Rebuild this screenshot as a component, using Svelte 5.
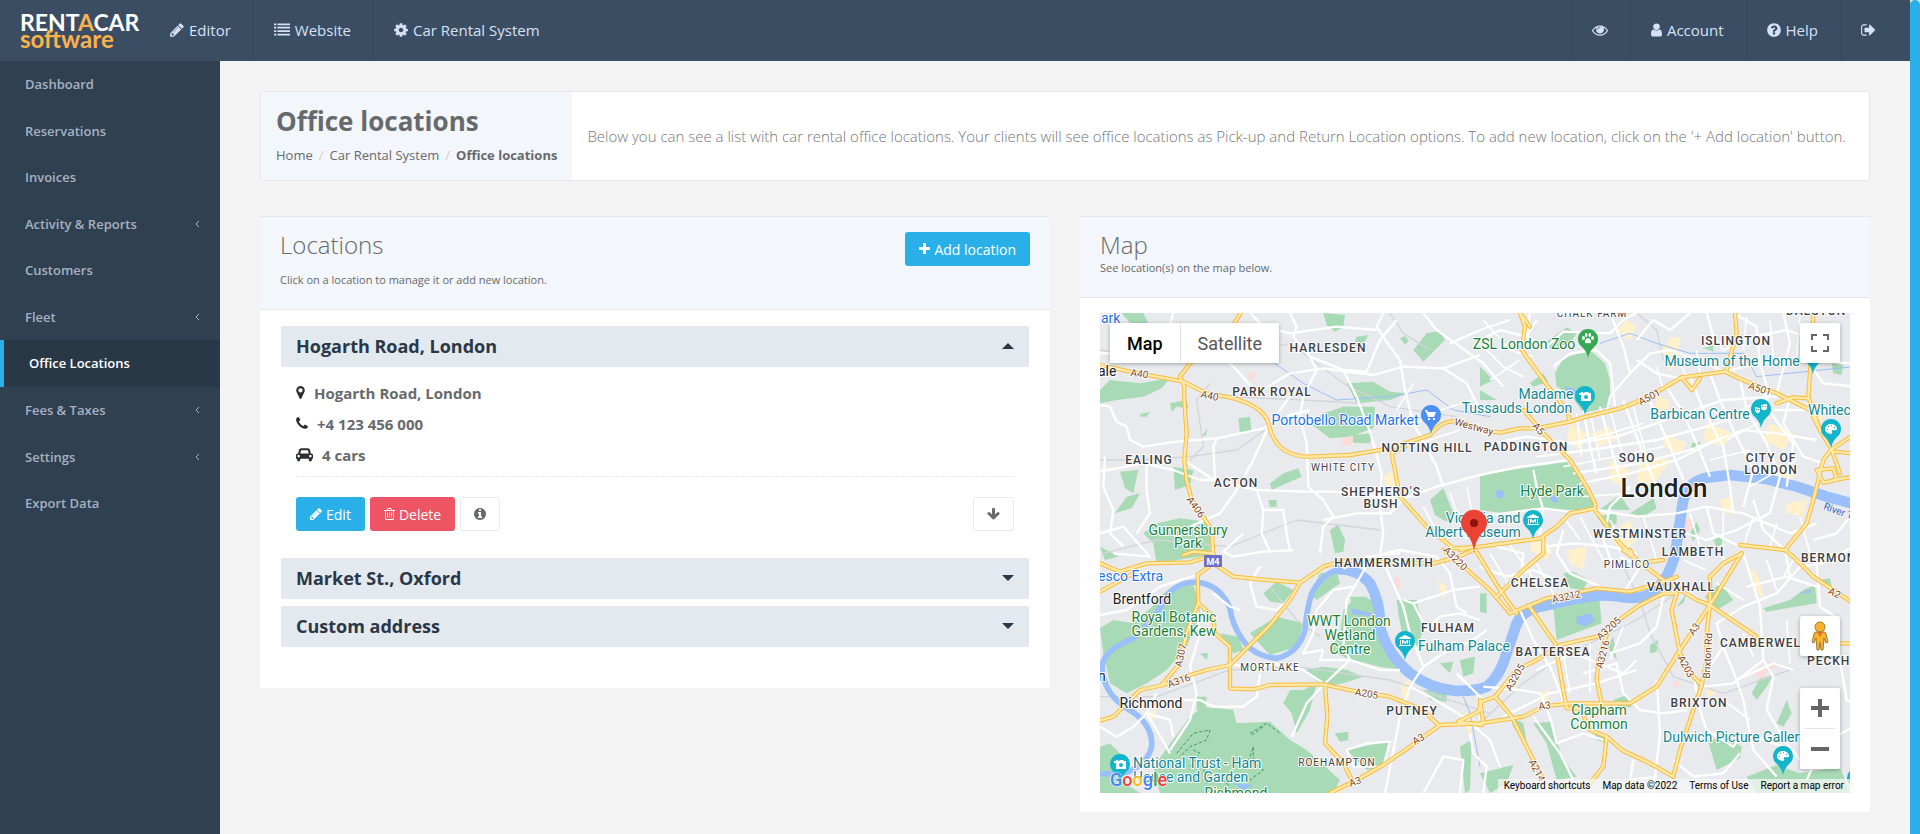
<script lang="ts">
  type Label = { t: string; x: number; y: number; r?: number; start?: boolean };

  const menu = [
    { label: "Dashboard" },
    { label: "Reservations" },
    { label: "Invoices" },
    { label: "Activity & Reports", sub: true },
    { label: "Customers" },
    { label: "Fleet", sub: true },
    { label: "Office Locations", active: true },
    { label: "Fees & Taxes", sub: true },
    { label: "Settings", sub: true },
    { label: "Export Data" },
  ];

  const locations = [
    { id: 1, name: "Hogarth Road, London", phone: "+4 123 456 000", cars: 4 },
    { id: 2, name: "Market St., Oxford", phone: "", cars: 0 },
    { id: 3, name: "Custom address", phone: "", cars: 0 },
  ];

  let openId = $state(1);
  let mapType = $state("map");

  function toggle(id: number) {
    openId = openId === id ? 0 : id;
  }

  // x offset, width, path
  const icons: Record<string, [number, number, string]> = {
    pencil: [128, 1536, "M491 1536l91-91-235-235-91 91v107h128v128h107zm523-928q0-22-22-22-10 0-17 7l-542 542q-7 7-7 17 0 22 22 22 10 0 17-7l542-542q7-7 7-17zm-54-192l416 416-832 832h-416v-416zm683 96q0 53-37 90l-166 166-416-416 166-165q36-38 90-38 53 0 91 38l235 234q37 39 37 91z"],
    list: [0, 1792, "M0 1312h256v192H0zM0 928h256v192H0zM0 544h256v192H0zM0 160h256v192H0zM384 1312h1408v192H384zM384 928h1408v192H384zM384 544h1408v192H384zM384 160h1408v192H384z"],
    cog: [128, 1536, "M1152 896q0-106-75-181t-181-75-181 75-75 181 75 181 181 75 181-75 75-181zm512-109v222q0 12-8 23t-20 13l-185 28q-19 54-39 91 35 50 107 138 10 12 10 25t-9 23q-27 37-99 108t-94 71q-12 0-26-9l-138-108q-44 23-91 38-16 136-29 186-7 28-36 28h-222q-14 0-24.5-8.5t-11.5-21.5l-28-184q-49-16-90-37l-141 107q-10 9-25 9-14 0-25-11-126-114-165-168-7-10-7-23 0-12 8-23 15-21 51-66.5t54-70.5q-27-50-41-99l-183-27q-13-2-21-12.5t-8-23.5v-222q0-12 8-23t19-13l186-28q14-46 39-92-40-57-107-138-10-12-10-24 0-10 9-23 26-36 98.5-107.5t94.5-71.5q13 0 26 10l138 107q44-23 91-38 16-136 29-186 7-28 36-28h222q14 0 24.5 8.5t11.5 21.5l28 184q49 16 90 37l142-107q9-9 24-9 13 0 25 10 129 119 165 170 7 8 7 22 0 12-8 23-15 21-51 66.5t-54 70.5q26 50 41 98l183 28q13 2 21 12.5t8 23.5z"],
    eye: [0, 1792, "M1664 960q-152-236-381-353 61 104 61 225 0 185-131.5 316.5t-316.5 131.5-316.5-131.5-131.5-316.5q0-121 61-225-229 117-381 353 133 205 333.5 326.5t434.5 121.5 434.5-121.5 333.5-326.5zm-720-384q0-20-14-34t-34-14q-125 0-214.5 89.5t-89.5 214.5q0 20 14 34t34 14 34-14 14-34q0-86 61-147t147-61q20 0 34-14t14-34zm848 384q0 34-20 69-140 230-376.5 368.5t-499.5 138.5-499.5-139-376.5-368q-20-35-20-69t20-69q140-229 376.5-368t499.5-139 499.5 139 376.5 368q20 35 20 69z"],
    user: [256, 1280, "M1536 1399q0 109-62.5 187t-150.5 78h-854q-88 0-150.5-78t-62.5-187q0-85 8.500-160.500t31.500-152 58.500-131 94-89 134.500-34.500q131 128 313 128t313-128q76 0 134.500 34.500t94 89 58.500 131 31.500 152 8.500 160.500zm-256-887q0 159-112.500 271.500t-271.500 112.500-271.500-112.500-112.500-271.500 112.500-271.500 271.500-112.500 271.500 112.500 112.500 271.500z"],
    question: [128, 1536, "M1024 1376v-192q0-14-9-23t-23-9h-192q-14 0-23 9t-9 23v192q0 14 9 23t23 9h192q14 0 23-9t9-23zm256-672q0-88-55.5-163t-138.5-116-170-41q-243 0-371 213-15 24 8 42l132 100q7 6 19 6 16 0 25-12 53-68 86-92 34-24 86-24 48 0 85.5 26t37.5 59q0 38-20 61t-68 45q-63 28-115.5 86.5t-52.5 125.5v36q0 14 9 23t23 9h192q14 0 23-9t9-23q0-19 21.5-49.5t54.5-49.5q32-18 49-28.5t46-35 44.500-48 28-60.500 12.500-81zm384 192q0 209-103 385.500t-279.500 279.500-385.500 103-385.500-103-279.500-279.500-103-385.500 103-385.500 279.500-279.500 385.500-103 385.500 103 279.500 279.500 103 385.500z"],
    signout: [64, 1664, "M704 1440q0 4 1 20t.5 26.5-3 23.5-10 19.5-20.5 6.5h-320q-119 0-203.5-84.5t-84.500-203.500v-704q0-119 84.500-203.500t203.500-84.500h320q13 0 22.500 9.500t9.500 22.500q0 4 1 20t.5 26.500-3 23.500-10 19.500-20.500 6.500h-320q-66 0-113 47t-47 113v704q0 66 47 113t113 47h312l11.500 1 11.500 3 8 5.500 7 9 2 13.500zm928-544q0 26-19 45l-544 544q-19 19-45 19t-45-19-19-45v-288h-448q-26 0-45-19t-19-45v-384q0-26 19-45t45-19h448v-288q0-26 19-45t45-19 45 19l544 544q19 19 19 45z"],
    marker: [384, 1024, "M1152 640q0-106-75-181t-181-75-181 75-75 181 75 181 181 75 181-75 75-181zm256 0q0 109-33 179l-364 774q-16 33-47.500 52t-67.500 19-67.500-19-46.500-52l-365-774q-33-70-33-179 0-212 150-362t362-150 362 150 150 362z"],
    phone: [192, 1408, "M1600 1240q0 27-10 70.500t-21 68.500q-21 50-122 106-94 51-186 51-27 0-53-3.500t-57.500-12.500-47-14.500-55.500-20.500-49-18q-98-35-175-83-127-79-264-216t-216-264q-48-77-83-175-3-9-18-49t-20.500-55.500-14.500-47-12.500-57.500-3.500-53q0-92 51-186 56-101 106-122 25-11 68.500-21t70.500-10q14 0 21 3 18 6 53 76 11 19 30 54t35 63.500 31 53.500q3 4 17.500 25t21.500 35.500 7 28.500q0 20-28.500 50t-62 55-62 53-28.500 46q0 9 5 22.500t8.500 20.500 14 24 11.500 19q76 137 174 235t235 174q2 1 19 11.500t24 14 20.500 8.500 22.500 5q18 0 46-28.500t53-62 55-62 50-28.500q14 0 28.500 7t35.500 21.500 25 17.500q25 15 53.500 31t63.500 35 54 30q70 35 76 53 3 7 3 21z"],
    car: [0, 2048, "M480 1088q0-66-47-113t-113-47-113 47-47 113 47 113 113 47 113-47 47-113zm36-320h1016l-89-357q-2-8-14-17.500t-21-9.500h-768q-9 0-21 9.500t-14 17.500zm1372 320q0-66-47-113t-113-47-113 47-47 113 47 113 113 47 113-47 47-113zm160-96v384q0 14-9 23t-23 9h-96v128q0 80-56 136t-136 56-136-56-56-136v-128h-1024v128q0 80-56 136t-136 56-136-56-56-136v-128h-96q-14 0-23-9t-9-23v-384q0-93 65.500-158.500t158.500-65.500h28l105-419q23-94 104-157.500t179-63.500h768q98 0 179 63.500t104 157.500l105 419h28q93 0 158.500 65.500t65.500 158.500z"],
    trash: [192, 1408, "M704 736v576q0 14-9 23t-23 9h-64q-14 0-23-9t-9-23v-576q0-14 9-23t23-9h64q14 0 23 9t9 23zm256 0v576q0 14-9 23t-23 9h-64q-14 0-23-9t-9-23v-576q0-14 9-23t23-9h64q14 0 23 9t9 23zm256 0v576q0 14-9 23t-23 9h-64q-14 0-23-9t-9-23v-576q0-14 9-23t23-9h64q14 0 23 9t9 23zm128 724v-948h-896v948q0 22 7 40.500t14.500 27 10.500 8.500h832q3 0 10.500-8.500t14.500-27 7-40.500zm-672-1076h448l-48-117q-7-9-17-11h-317q-10 2-17 11zm928 32v64q0 14-9 23t-23 9h-96v948q0 83-47 143.500t-113 60.500h-832q-66 0-113-58.500t-47-141.500v-952h-96q-14 0-23-9t-9-23v-64q0-14 9-23t23-9h309l70-167q15-37 54-63t79-26h320q40 0 79 26t54 63l70 167h309q14 0 23 9t9 23z"],
    info: [128, 1536, "M1152 1376v-160q0-14-9-23t-23-9h-96v-512q0-14-9-23t-23-9h-320q-14 0-23 9t-9 23v160q0 14 9 23t23 9h96v320h-96q-14 0-23 9t-9 23v160q0 14 9 23t23 9h448q14 0 23-9t9-23zm-128-896v-160q0-14-9-23t-23-9h-192q-14 0-23 9t-9 23v160q0 14 9 23t23 9h192q14 0 23-9t9-23zm640 416q0 209-103 385.500t-279.500 279.500-385.500 103-385.500-103-279.500-279.500-103-385.500 103-385.500 279.500-279.500 385.500-103 385.500 103 279.500 279.500 103 385.500z"],
    down: [64, 1664, "M1675 832q0 53-37 90l-651 652q-39 37-91 37-53 0-90-37l-651-652q-38-36-38-90 0-53 38-91l74-75q39-37 91-37 53 0 90 37l294 294v-704q0-52 38-90t90-38h128q52 0 90 38t38 90v704l294-294q37-37 90-37 52 0 91 37l75 75q37 39 37 91z"],
    plus: [192, 1408, "M1600 736v192q0 40-28 68t-68 28h-416v416q0 40-28 68t-68 28h-192q-40 0-68-28t-28-68v-416h-416q-40 0-68-28t-28-68v-192q0-40 28-68t68-28h416v-416q0-40 28-68t68-28h192q40 0 68 28t28 68v416h416q40 0 68 28t28 68z"],
  };

  // map shapes are drawn on a 2250 x 1440 sheet, labels on 750 x 480
  const thames =
    "M2290 612L2210 590L2120 560L2030 537L1920 525L1850 533Q1790 545 1778 610L1765 700L1755 765Q1735 840 1690 875Q1660 900 1600 892Q1540 878 1450 898L1330 925Q1285 945 1275 985L1250 1060Q1230 1130 1190 1160Q1150 1175 1090 1172Q1020 1165 960 1120Q890 1060 870 980Q872 910 840 850Q800 805 740 808";
  const thamesWest =
    "M760 806Q700 815 665 880Q650 930 645 990Q625 1060 560 1075Q490 1070 455 1015Q425 970 420 925Q395 865 340 850Q270 835 230 890Q200 950 130 1015Q40 1050 36 1100Q40 1180 110 1225Q190 1270 185 1340Q170 1400 100 1420L30 1422";

  const parks = [
    "M30 270L60 240L150 250L240 235L215 265L160 290L80 300L30 310z",
    "M95 39L160 40L180 80L120 70z",
    "M700 39L765 45L760 80L735 95L710 75z",
    "M970 150L1010 100L1050 92L1065 120L1000 185z",
    "M770 250L850 245L900 275L950 280L900 300L800 310z",
    "M700 340L760 320L855 320L850 385L780 410L720 415L660 370z",
    "M785 405L845 400L840 430L790 428z",
    "M800 110L835 105L820 135L790 140z",
    "M930 115L945 108L957 122L945 134z",
    "M240 310L290 300L295 325L260 320L245 335z",
    "M150 342L180 335L170 350L152 350z",
    "M445 355L480 350L485 395L450 400z",
    "M335 410L352 385L348 405z",
    "M90 515L145 510L130 580L105 565z",
    "M250 500L310 510L300 555L255 570z",
    "M75 640L110 590L150 580L125 625z",
    "M540 550L580 520L625 505L635 530L590 550L545 570z",
    "M160 700L200 670L270 655L350 665L365 700L360 765L200 790L190 730z",
    "M1010 320L1025 315L1020 350z",
    "M720 690L745 675L765 720L760 755L735 760z",
    "M1020 600L1060 565L1090 640L1070 665L1035 645z",
    "M535 600L560 600L560 620L540 622z",
    "M30 740L60 755L85 770L45 780z",
    "M1395 220L1420 175L1500 150L1545 190L1560 240L1560 320L1480 340L1440 280L1400 260z",
    "M1320 250L1360 220L1375 245L1330 260z",
    "M1370 125L1430 82L1460 100L1440 130L1380 145z",
    "M1170 525L1330 500L1430 485L1470 530L1515 620L1440 635L1360 625L1240 640L1170 630z",
    "M1530 628L1590 585L1620 630z",
    "M1620 640L1690 595L1700 625L1660 650z",
    "M1520 650L1580 640L1580 670L1550 690z",
    "M1170 200L1210 240L1170 260z",
    "M1170 270L1220 300L1170 300z",
    "M1805 430L1830 425L1830 445L1805 448z",
    "M1840 145L1870 135L1870 155z",
    "M1800 700L1820 665L1830 690L1810 725z",
    "M1870 720L1900 705L1905 730L1880 740z",
    "M2225 190L2260 195L2255 225L2230 220z",
    "M30 985L70 960L130 970L220 890L290 850L325 900L330 940L290 1040L230 1110L170 1150L110 1180L60 1150L40 1060z",
    "M190 905L245 860L310 855L320 890L250 910z",
    "M480 1000L560 950L640 970L620 1040L540 1065z",
    "M520 880L560 845L610 870L580 910L540 905z",
    "M690 820L740 815L750 850L680 900L660 880z",
    "M760 930L800 890L850 900L860 960L900 1060L930 1110L870 1100L770 1075L720 1050L750 1000z",
    "M780 890L830 890L870 970L790 960z",
    "M390 1000L445 1010L460 1050L430 1060z",
    "M640 1110L700 1100L770 1110L820 1130L760 1150L700 1160z",
    "M580 1210L600 1170L640 1170L680 1150L660 1230L620 1300L605 1240z",
    "M330 1060L355 1060L350 1080z",
    "M300 1250L340 1220L430 1230L440 1270L540 1265L600 1320L650 1350L750 1440L730 1479L320 1479L210 1479L190 1400z",
    "M320 1190L350 1190L345 1240L320 1230z",
    "M30 1340L60 1330L110 1380L60 1420L150 1479L30 1479z",
    "M770 1350L900 1322L880 1400L830 1410z",
    "M735 1300L775 1295L775 1320L750 1325z",
    "M920 900L980 900L1000 990L980 1040L940 1020L925 940z",
    "M1050 1090L1090 1085L1080 1120z",
    "M1110 1080L1155 1070L1150 1120L1120 1130z",
    "M1000 1170L1070 1170L1070 1205L1020 1200z",
    "M1110 1340L1145 1320L1140 1470L1125 1479z",
    "M1390 925L1525 870L1535 970L1400 1020z",
    "M1420 820L1450 815L1495 840L1480 870L1440 865z",
    "M1170 880L1190 880L1190 940L1170 935z",
    "M1330 1270L1380 1265L1420 1380L1460 1430L1400 1440L1370 1330z",
    "M1260 1250L1300 1270L1310 1330L1270 1280z",
    "M1570 1200L1610 1185L1625 1220L1590 1225z",
    "M1510 1290L1560 1310L1550 1330L1520 1320z",
    "M1680 1035L1705 1020L1700 1055L1680 1060z",
    "M1550 1040L1570 1010L1580 1080z",
    "M2020 925L2100 900L2140 870L2175 855L2180 910L2090 925L2030 935z",
    "M1985 1180L2010 1135L2050 1125L2030 1160L2000 1200z",
    "M2060 1270L2090 1200L2105 1240L2080 1280z",
    "M1855 1325L1900 1305L1955 1340L1950 1375L1880 1410z",
    "M1970 1430L2060 1395L2130 1420L2250 1400L2280 1479L2000 1479z",
    "M1845 890L1890 850L1930 900L1880 930z",
    "M1170 1420L1270 1395L1250 1450L1200 1479z",
    "M1760 920L1790 880L1780 910z",
    "M2190 840L2220 835L2225 860z",
  ];

  const cream = [
    "M1715 150L1745 110L1770 115L1765 180L1740 215z",
    "M1580 90L1610 60L1640 80L1620 120z",
    "M880 530L910 510L925 560L890 570z",
    "M1720 400L1790 430L1770 460L1720 440z",
    "M1650 470L1740 480L1700 540L1640 560z",
    "M1500 400L1560 380L1580 420L1520 440z",
    "M1440 370L1490 400L1470 450L1430 420z",
    "M1560 480L1620 510L1600 560L1560 540z",
    "M1850 370L1930 400L1900 440L1840 420z",
    "M2040 370L2110 400L2080 450L2020 420z",
    "M2060 490L2120 520L2080 555L2030 530z",
    "M1890 600L1920 590L1930 640L1900 640z",
    "M2090 610L2150 600L2140 650L2090 640z",
    "M1560 700L1620 660L1640 720L1590 760z",
    "M1430 750L1490 740L1480 810L1440 790z",
    "M1330 710L1390 740L1370 780L1320 750z",
    "M1980 800L2005 830L2025 900L2000 880z",
    "M2160 300L2210 330L2190 370z",
    "M1700 290L1740 300L1730 340L1690 330z",
    "M1850 1160L1880 1180L1850 1190z",
    "M935 1150L960 1140L955 1200L935 1190z",
    "M160 1240L200 1230L190 1260z",
    "M1120 1240L1150 1250L1140 1320z",
    "M1350 1180L1375 1170L1380 1230z",
    "M30 505L80 500L40 515z",
    "M1040 840L1070 860L1060 900z",
  ];

  const streets = [
    "M600 39L620 80L610 110L660 170L760 210L800 290L845 410L875 520L870 620L880 700L870 765L900 830L940 920L960 1000L1000 1100L960 1160L930 1250L885 1479",
    "M880 39L860 80L900 140L930 180L945 270L970 370L1040 500L1060 560",
    "M1000 39L1040 90L1110 140L1180 190L1240 260",
    "M660 170L680 210L640 290L630 350L650 430L655 560L700 600L730 650L700 680L690 760",
    "M30 315L60 320L80 365L110 380L120 420L160 440L260 425L380 415L520 385L600 345L660 330",
    "M380 415L370 440L375 540L330 540L250 510L160 490L30 515",
    "M280 480L380 545L500 570L640 575L730 575L870 590",
    "M600 290L540 370L490 480L440 570L390 640L300 680",
    "M30 700L100 680L180 770L70 760",
    "M500 570L520 630L515 700L540 755",
    "M520 630L580 630L590 700L600 755",
    "M460 700L400 755L430 770L520 755L610 750",
    "M250 39L235 90L210 130L160 160L30 160",
    "M480 39L520 80L600 100L740 80L860 90",
    "M400 170L440 210L500 280L600 220L700 205L850 225",
    "M760 210L830 215L870 120L920 60",
    "M850 225L940 200L1060 205L1170 165",
    "M1060 205L1130 250L1170 330L1300 340",
    "M1080 130L1170 90L1260 60",
    "M870 590L930 600L1040 560L1170 525L1290 500L1440 480",
    "M700 660L800 640L900 640L940 600",
    "M45 470L40 560L70 630L60 700L100 740",
    "M170 490L170 570L180 640L140 700",
    "M1170 120L1230 90L1310 110L1340 60",
    "M1320 39L1310 110L1370 140L1420 95L1560 100L1600 60L1640 39",
    "M1560 39L1600 140L1620 220L1560 290L1550 340",
    "M1390 200L1440 160L1520 150L1560 190L1575 320",
    "M1640 120L1690 60L1740 90L1800 39",
    "M1620 220L1680 160L1740 150L1850 190L1900 215",
    "M1640 180L1700 220L1770 235",
    "M1850 39L1870 110L1900 150L1990 110L2090 90L2170 120",
    "M1900 215L2010 190L2150 180L2290 190",
    "M1930 39L2000 80L2010 190L2040 290",
    "M2080 39L2100 130L2060 280",
    "M2150 180L2200 250L2290 260",
    "M1210 430L1310 410L1450 430L1580 410L1700 370L1900 300L2060 290",
    "M1340 470L1500 450L1700 420L1850 380L2000 330L2150 330",
    "M1450 520L1650 490L1800 450L1960 390L2060 400L2180 420",
    "M1470 550L1620 520L1760 480L1880 420",
    "M1480 330L1500 440L1520 520",
    "M1530 320L1560 430L1590 540",
    "M1600 300L1640 410L1690 540L1740 600",
    "M1670 280L1700 350L1740 440L1780 540",
    "M1730 260L1780 340L1820 430L1860 530",
    "M1800 230L1840 330L1900 440L1920 560L1930 640",
    "M1860 220L1890 300L1930 390L1990 510L1960 620",
    "M1950 240L1970 330L2030 430L2070 530L2040 640",
    "M2020 270L2050 350L2110 430L2090 560",
    "M2100 290L2080 370L2140 470L2200 490",
    "M1330 510L1340 560L1360 630L1350 700L1380 760",
    "M1515 630L1640 650L1760 640",
    "M1620 560L1560 620L1540 720L1570 800",
    "M1760 640L1850 620L1960 640L2100 700L2180 670",
    "M1760 690L1850 720L1940 690L2040 640",
    "M1850 620L1870 700L1950 740",
    "M1990 600L2020 690L2085 750L2100 830",
    "M2170 720L2240 700L2290 640",
    "M1170 650L1240 640L1360 625L1440 635L1520 630",
    "M1360 740L1460 730L1560 740L1640 760",
    "M1420 690L1400 760L1440 820L1530 860",
    "M1220 740L1300 760L1290 850",
    "M1170 800L1250 830L1330 810L1400 840",
    "M870 765L930 750L1040 770L1080 820L1100 920L1130 940",
    "M760 806L830 770L930 760",
    "M790 860L730 870L680 930L670 1000L640 1060L700 1050",
    "M840 780L770 900L760 1040L780 1080L705 1150L650 1210L605 1310",
    "M700 1050L690 1080L780 1080L870 1110L930 1110",
    "M940 900L970 910L1010 990L1050 950L1110 940L1170 960",
    "M970 910L1090 870L1170 860",
    "M1000 1100L1060 1060L1150 1020L1190 990",
    "M960 1160L1020 1190L1120 1250L1200 1320L1230 1400",
    "M1100 1120L1180 1200L1170 1260",
    "M30 945L110 930L210 860L320 825",
    "M320 920L330 1000L300 1100L320 1180L300 1260L240 1350",
    "M510 800L480 850L500 920L560 930L600 900",
    "M370 880L420 920L450 930",
    "M420 1090L500 1110L550 1090L640 1110L700 1150",
    "M510 1120L500 1190L460 1220L370 1220L330 1200L230 1200",
    "M200 1180L170 1240L200 1290L240 1360",
    "M30 1280L80 1310L130 1280L170 1240L240 1260L250 1310",
    "M770 1350L830 1330L900 1325L880 1400L790 1400z",
    "M1000 1479L1060 1370L1120 1380L1110 1479",
    "M1140 1300L1150 1360L1190 1400L1180 1479",
    "M1290 930L1330 1020L1380 1100L1420 1200L1400 1220",
    "M1340 1110L1450 1060L1600 1120L1640 1080",
    "M1240 1250L1380 1180L1520 1150L1640 1110",
    "M1180 1160L1290 1170L1350 1180L1380 1250L1400 1330L1480 1300L1540 1320",
    "M1330 1250L1410 1360L1460 1460",
    "M1480 1120L1580 1090L1600 1180L1650 1230L1720 1240L1790 1230",
    "M1720 890L1700 980L1650 1030L1560 1060",
    "M1700 1140L1710 1300L1690 1479",
    "M1860 1100L1900 1040L1880 970L1960 920L2060 880",
    "M1900 1040L1940 1140L1960 1200L1990 1350L2060 1430",
    "M1940 1140L2050 1090L2110 1110",
    "M1840 1160L1930 1150L2020 1080L2010 920L1960 760",
    "M1810 1120L1830 1230L1850 1290L1930 1340L1960 1300L2080 1340",
    "M2020 1080L2050 1130L2030 1230L2090 1330L2130 1380",
    "M1750 1380L1810 1430L1900 1420L1950 1360",
    "M2060 880L2130 800L2200 790L2290 740",
    "M2180 790L2190 920L2250 960",
    "M1970 860L2090 830L2180 860",
    "M1600 880L1650 800L1590 770",
    "M2250 1080L2270 1200L2290 1210",
    "M1630 1380L1620 1440L1700 1430",
    "M2290 1280L2200 1330L2150 1440",
  ];

  const lanes = [
    "M1180 60L1260 150L1330 170M1180 140L1240 200L1300 230M1200 240L1290 180",
    "M1460 340L1475 470M1500 335L1530 480M1560 330L1600 470M1630 320L1670 470",
    "M1400 440L1560 400L1660 370M1420 500L1600 465L1720 440M1480 590L1620 580",
    "M1700 200L1720 270M1760 170L1790 230M1820 150L1830 220",
    "M1880 360L2000 310M1910 420L2040 350M1860 480L1980 450M1980 560L2120 480",
    "M1970 50L1960 150M2040 60L2050 170M2130 50L2120 170M2220 90L2210 180",
    "M1800 640L1830 740M1900 640L1900 780M1990 650L1960 740M2060 670L2040 740M2130 650L2160 760",
    "M1420 650L1470 720M1470 650L1540 780M1560 660L1610 750M1660 650L1700 780",
    "M1780 780L1850 810M1880 850L1960 900M2030 780L2060 870M2110 780L2080 830",
    "M1200 760L1260 860M1250 720L1340 850M1340 790L1400 900",
    "M1000 620L1060 730M1080 580L1130 720M1130 560L1160 700",
    "M960 380L1050 330L1150 300M990 430L1110 390M920 330L970 250",
    "M1900 1200L1980 1260M1960 1000L1990 1070M2090 960L2100 1090",
    "M1420 1060L1440 1180M1500 1030L1500 1180M1600 980L1560 1080",
  ];

  const rails = [
    "M30 150L200 180L400 170L600 130L760 250L900 320L1100 350",
    "M30 480L150 480L300 470L440 450L540 380",
    "M420 290L640 300L820 310",
    "M40 760L200 720L420 740L620 660L870 690",
    "M30 1190L200 1190L420 1110L620 1100L900 1140L1200 1240",
    "M540 860L620 960L690 1010",
    "M1600 800L1650 900L1680 1000L1750 1130L1900 1180L2100 1110",
    "M1170 1270L1300 1150L1400 1080L1640 960L1760 880",
    "M300 480L340 440L320 300L360 250",
    "M900 39L940 100L1020 150",
    "M1640 39L1700 90L1720 180",
  ];

  const majors = [
    "M30 195L120 215L200 230L280 245L350 280L420 292Q530 320 538 380Q560 470 660 470L780 465L900 445L960 425L1020 405Q1060 355 1110 365L1180 390L1230 398L1290 385L1340 385L1440 365L1480 352L1590 325Q1650 305 1720 265L1775 232L1905 215L1970 245L2060 280L2100 300L2160 330L2190 390L2225 450L2250 520",
    "M452 39L430 75L300 190L270 230L283 260L283 300L290 400L283 480L290 540L305 600L340 650L365 690L370 765",
    "M30 790L90 815L170 790L300 787L370 765",
    "M30 875L130 820",
    "M323 825L370 790L430 830L530 840L630 848L700 800L760 782L1030 790L1100 772L1150 750",
    "M630 848L600 900L540 975L420 1095L350 1110L300 1125L220 1155L150 1170L110 1210L70 1250L30 1262",
    "M323 825L325 910L290 1000L270 1090L215 1155",
    "M325 910L370 950L375 1000L420 1040L420 1165L490 1168L540 1155L700 1153L800 1175L900 1190L1000 1230L1045 1275",
    "M705 1153L712 1250L705 1330L760 1390L785 1440",
    "M720 1479L800 1440L880 1395L960 1340L1050 1275L1170 1270L1300 1250L1360 1220L1440 1210L1620 1210L1700 1160L1770 1050L1860 915L1955 760",
    "M1105 1265L1165 1235L1175 1205L1215 1190L1280 1110L1340 1080L1410 1035L1520 1010L1600 950L1650 915L1720 880L1760 880",
    "M1105 1265L1175 1275",
    "M1215 1190L1265 1250L1360 1440",
    "M1170 1200L1180 1270",
    "M1470 1225L1500 1290L1550 1310L1595 1350L1680 1390L1750 1430",
    "M1550 1310L1540 1400L1500 1450",
    "M1315 915L1395 1030L1430 1225L1470 1225",
    "M1555 990L1525 1080L1520 1140L1535 1210",
    "M1260 940L1370 895L1520 865L1620 875L1710 850L1760 830",
    "M1600 750L1720 840L1820 900L1860 915L2000 1010",
    "M2250 1030L2290 1030",
    "M1760 880L1745 930L1760 1010L1770 1060L1810 1130L1835 1155",
    "M1860 915L1850 1000L1850 1080L1835 1155L1810 1230L1770 1350L1750 1430",
    "M1950 735L2085 750L2110 770L2170 830L2290 910",
    "M2085 750L2150 670L2170 600L2200 480L2222 450L2290 405",
    "M1290 39L1305 80L1295 150L1360 240L1390 280L1430 330L1440 365",
    "M1290 39L1320 80",
    "M1300 330L1360 400L1440 480L1490 560L1515 610L1515 630L1590 730L1640 780",
    "M1515 625L1440 640L1400 680L1350 715L1170 740L1090 745L1010 680L930 590L905 460L945 440",
    "M1060 750L1110 790L1200 870L1260 940",
    "M1110 750L1150 740L1230 870L1280 940",
    "M1360 715L1360 760L1300 810L1220 890",
    "M1935 39L1940 100L1908 215",
    "M2170 39L2160 220L2155 290L2190 390",
    "M2060 310L2110 292L2155 295",
    "M1830 235L1805 270L1775 232",
    "M2180 510L2230 505L2240 540L2200 548L2180 510",
    "M2230 455L2290 460",
    "M2230 540L2290 530",
    "M1620 750L1640 790L1720 780",
    "M1955 760L1900 790L1860 830L1860 915",
    "M280 765L310 755L370 760",
  ];

  const districts: Label[] = [
    { t: "HARLESDEN", x: 228, y: 39 }, { t: "PARK ROYAL", x: 172, y: 83 },
    { t: "NOTTING HILL", x: 327, y: 139 }, { t: "EALING", x: 49, y: 151 },
    { t: "ACTON", x: 136, y: 174 }, { t: "SHEPHERD'S", x: 281, y: 183 },
    { t: "BUSH", x: 281, y: 195 }, { t: "ISLINGTON", x: 636, y: 32 },
    { t: "PADDINGTON", x: 426, y: 138 }, { t: "SOHO", x: 537, y: 149 },
    { t: "CITY OF", x: 671, y: 149 }, { t: "LONDON", x: 671, y: 161 },
    { t: "WESTMINSTER", x: 540, y: 225 }, { t: "LAMBETH", x: 593, y: 243 },
    { t: "BERMONDSEY", x: 701, y: 249, start: true }, { t: "DALSTON", x: 686, y: 2, start: true },
    { t: "HAMMERSMITH", x: 284, y: 254 }, { t: "FULHAM", x: 348, y: 319 },
    { t: "PUTNEY", x: 312, y: 402 }, { t: "CHELSEA", x: 440, y: 274 },
    { t: "VAUXHALL", x: 581, y: 278 }, { t: "BATTERSEA", x: 453, y: 343 },
    { t: "CAMBERWELL", x: 620, y: 334, start: true }, { t: "PECKHAM", x: 707, y: 352, start: true },
    { t: "BRIXTON", x: 599, y: 394 },
  ];

  const quarters: Label[] = [
    { t: "WHITE CITY", x: 243, y: 158 }, { t: "CHALK FARM", x: 492, y: 4 },
    { t: "MORTLAKE", x: 170, y: 358 }, { t: "ROEHAMPTON", x: 237, y: 453 },
    { t: "PIMLICO", x: 527, y: 255 },
  ];

  const towns: Label[] = [
    { t: "ale", x: -2, y: 63, start: true }, { t: "Brentford", x: 42, y: 291 },
    { t: "Richmond", x: 51, y: 395 }, { t: "n", x: -2, y: 368, start: true },
  ];

  const shops: Label[] = [
    { t: "ark", x: 1, y: 10, start: true }, { t: "esco Extra", x: -2, y: 268, start: true },
    { t: "Portobello Road Market", x: 245, y: 112 },
  ];

  const greens: Label[] = [
    { t: "Gunnersbury", x: 88, y: 222 }, { t: "Park", x: 88, y: 235 },
    { t: "ZSL London Zoo", x: 424, y: 36 }, { t: "Hyde Park", x: 452, y: 183 },
    { t: "Royal Botanic", x: 74, y: 309 }, { t: "Gardens, Kew", x: 74, y: 323 },
    { t: "WWT London", x: 249, y: 313 }, { t: "Wetland", x: 250, y: 327 },
    { t: "Centre", x: 250, y: 341 }, { t: "Clapham", x: 499, y: 402 },
    { t: "Common", x: 499, y: 416 }, { t: "Richmond", x: 136, y: 485 },
  ];

  const sights: Label[] = [
    { t: "Victoria and", x: 383, y: 210 }, { t: "Albert Museum", x: 373, y: 224 },
    { t: "Museum of the Home", x: 632, y: 53 }, { t: "Madame", x: 446, y: 86 },
    { t: "Tussauds London", x: 417, y: 100 }, { t: "Barbican Centre", x: 600, y: 106 },
    { t: "Whitechapel", x: 708, y: 102, start: true }, { t: "Fulham Palace", x: 318, y: 338, start: true },
    { t: "Dulwich Picture Gallery", x: 563, y: 429, start: true },
    { t: "National Trust - Ham", x: 33, y: 455, start: true },
    { t: "House and Garden", x: 33, y: 469, start: true },
  ];

  const roadNames: Label[] = [
    { t: "A40", x: 39, y: 64, r: 8 }, { t: "A40", x: 109, y: 86, r: 12 },
    { t: "A406", x: 93, y: 196, r: 55 }, { t: "Westway", x: 373, y: 117, r: 15 },
    { t: "A3220", x: 353, y: 248, r: 45 }, { t: "A501", x: 551, y: 87, r: -28 },
    { t: "A501", x: 659, y: 79, r: 18 }, { t: "A5", x: 436, y: 118, r: 50 },
    { t: "A307", x: 84, y: 343, r: -78 }, { t: "A316", x: 80, y: 371, r: -20 },
    { t: "A205", x: 266, y: 384, r: 10 }, { t: "A3", x: 320, y: 429, r: -30 },
    { t: "A3", x: 256, y: 472, r: -18 }, { t: "A3212", x: 467, y: 287, r: -12 },
    { t: "A3205", x: 511, y: 318, r: -42 }, { t: "A3216", x: 506, y: 342, r: -75 },
    { t: "A3205", x: 418, y: 366, r: -60 }, { t: "A3", x: 597, y: 318, r: -55 },
    { t: "A203", x: 583, y: 355, r: 62 }, { t: "Brixton Rd", x: 611, y: 343, r: -87 },
    { t: "A2", x: 733, y: 283, r: 26 }, { t: "A3", x: 445, y: 396, r: -8 },
    { t: "A214", x: 434, y: 459, r: 62 },
  ];

  const layers = [
    { kind: "road", list: roadNames },
    { kind: "district", list: districts },
    { kind: "quarter", list: quarters },
    { kind: "town", list: towns },
    { kind: "shop", list: shops },
    { kind: "green", list: greens },
    { kind: "sight", list: sights },
  ];

  const glyphs: Record<string, string> = {
    cart: "M-6 -5h2l1 2h8l-2 5h-6l-2 -5zM-3 3h2v2h-2zM2 3h2v2h-2z",
    camera: "M-6 -3h2v-1h2v1h1l1 -1h3l1 1h2v8h-10v-6h-2zM3 1a2 2 0 1 0-4 0a2 2 0 1 0 4 0z",
    paw: "M-6 -1a1.500 2 0 1 0 3 0a1.500 2 0 1 0-3 0zM-3 -4a1.300 2 0 1 0 2.600 0a1.300 2 0 1 0-2.600 0zM.6 -4a1.300 2 0 1 0 2.600 0a1.300 2 0 1 0-2.600 0zM3 -1a1.500 2 0 1 0 3 0a1.500 2 0 1 0-3 0zM0 -1q2 0 3 3q1 3-3 2q-4 1-3-2q1-3 3-3z",
    museum: "M-6 -3L0 -6L6 -3V-2H-6zM-5 -1h1v5h-1zM4 -1h1v5h-1zM-6 4h12v1h-12zM-3 3v-4h1l2 2l2-2h1v4h-1v-2l-2 2l-2-2v2z",
    masks: "M-6 -2l5 1v3q-1 3-3 2q-2-1-2-3zM0 -4l6 -1v3q0 3-2 3q-3 1-4-2zM-5 0v1h1v-1zM-3 0v1h1v-1zM1 -3v1h1v-1zM4 -3v1h1v-1z",
    art: "M0 -5a6 5 0 1 0 0 10q2-1 1-2q-1-2 1-2q4 1 4-1a6 5 0 0 0-6-5zM-4 0h1v1h-1zM-3 -3h1v1h-1zM0 -4h1v1h-1zM3 -2h1v1h-1z",
  };

  const pins = [
    { x: 331, y: 102, color: "#4e8ff5", glyph: "cart" },
    { x: 488, y: 26, color: "#34a853", glyph: "paw" },
    { x: 485, y: 83, color: "#12b5cb", glyph: "camera" },
    { x: 713, y: 42, color: "#12b5cb", glyph: "museum" },
    { x: 661, y: 96, color: "#12b5cb", glyph: "masks" },
    { x: 731, y: 116, color: "#12b5cb", glyph: "art" },
    { x: 433, y: 207, color: "#12b5cb", glyph: "museum" },
    { x: 305, y: 328, color: "#12b5cb", glyph: "museum" },
    { x: 20, y: 451, color: "#12b5cb", glyph: "camera" },
    { x: 683, y: 443, color: "#12b5cb", glyph: "art" },
    { x: 757, y: 465, color: "#12b5cb", glyph: "camera" },
  ];
</script>

{#snippet icon(name: string, size: number)}
  <svg
    class="icon"
    viewBox="{icons[name][0]} 0 {icons[name][1]} 1792"
    width={Math.round((size * icons[name][1]) / 1792)}
    height={size}
    aria-hidden="true"
  >
    <path d={icons[name][2]} />
  </svg>
{/snippet}

<div class="page">
  <div class="app">
    <header class="topbar">
      <a class="logo" href="#home">
        <span>RENT<b>A</b>CAR</span>
        <em>software</em>
      </a>
      <nav class="main-nav">
        <a href="#editor">{@render icon("pencil", 16)} Editor</a>
        <a href="#website">{@render icon("list", 16)} Website</a>
        <a href="#system">{@render icon("cog", 16)} Car Rental System</a>
      </nav>
      <nav class="user-nav">
        <a href="#preview" aria-label="Preview">{@render icon("eye", 16)}</a>
        <a href="#account">{@render icon("user", 16)} Account</a>
        <a href="#help">{@render icon("question", 16)} Help</a>
        <a href="#logout" aria-label="Log out">{@render icon("signout", 16)}</a>
      </nav>
    </header>

    <div class="body">
      <nav class="sidebar">
        <ul>
          {#each menu as item}
            <li class:active={item.active}>
              <a href="#menu">
                {item.label}
                {#if item.sub}
                  <svg class="angle" viewBox="0 0 5 8" width="5" height="8" aria-hidden="true">
                    <path d="M4 1L1 4L4 7" />
                  </svg>
                {/if}
              </a>
            </li>
          {/each}
        </ul>
      </nav>

      <main>
        <section class="heading">
          <div class="heading-title">
            <h1>Office locations</h1>
            <ol class="breadcrumb">
              <li><a href="#home">Home</a></li>
              <li><a href="#system">Car Rental System</a></li>
              <li><strong>Office locations</strong></li>
            </ol>
          </div>
          <p>
            Below you can see a list with car rental office locations. Your clients will see office
            locations as Pick-up and Return Location options. To add new location, click on the '+
            Add location' button.
          </p>
        </section>

        <div class="columns">
          <section class="panel">
            <div class="panel-head spaced">
              <div>
                <h2>Locations</h2>
                <small>Click on a location to manage it or add new location.</small>
              </div>
              <button class="btn primary">{@render icon("plus", 14)} Add location</button>
            </div>
            <div class="panel-body list">
              {#each locations as loc (loc.id)}
                <div class="location">
                  <button
                    class="location-head"
                    aria-expanded={openId === loc.id}
                    onclick={() => toggle(loc.id)}
                  >
                    {loc.name}
                    <span class="caret" class:up={openId === loc.id}></span>
                  </button>
                  {#if openId === loc.id}
                    <div class="location-body">
                      <ul class="facts">
                        <li>{@render icon("marker", 15)} {loc.name}</li>
                        <li>{@render icon("phone", 15)} {loc.phone}</li>
                        <li>{@render icon("car", 15)} {loc.cars} cars</li>
                      </ul>
                      <div class="actions">
                        <button class="btn primary">{@render icon("pencil", 14)} Edit</button>
                        <button class="btn danger">{@render icon("trash", 14)} Delete</button>
                        <button class="btn white" aria-label="Info">{@render icon("info", 14)}</button>
                        <button class="btn white last" aria-label="Move down">{@render icon("down", 14)}</button>
                      </div>
                    </div>
                  {/if}
                </div>
              {/each}
            </div>
          </section>

          <section class="panel">
            <div class="panel-head">
              <h2>Map</h2>
              <small>See location(s) on the map below.</small>
            </div>
            <div class="panel-body">
              <div class="map">
                <svg class="canvas" viewBox="0 0 750 480" preserveAspectRatio="xMidYMid slice">
                  <g transform="scale(.33333) translate(-30 -39)" fill="none" stroke-linejoin="round">
                    <g class="park">
                      {#each parks as d}<path {d} />{/each}
                    </g>
                    <g class="cream">
                      {#each cream as d}<path {d} />{/each}
                    </g>
                    <path class="rosy" d="M470 225l15-12l12 15l-14 14zM755 415l35-8l-5 32l-28-4zM905 840l20-10l8 30l-15 8zM2005 1105l40-22l20 15l-40 20l-5 20l-25-10zM1785 655l25 5l-10 30l-20 10zM1750 1140l15 5l5 20l-18-8z" />
                    <g class="rail">
                      {#each rails as d}<path {d} />{/each}
                    </g>
                    <path class="water" stroke-width="32" d={thames} />
                    <path class="water" stroke-width="17" d={thamesWest} />
                    <path class="water" stroke-width="3" d="M400 170L540 180L640 250L740 300L900 290L1010 270L1090 330L1200 350M1530 130L1620 100L1700 130L1800 160L1960 160L2000 230L2290 200M1120 1190L1140 1240L1170 1400" />
                    <path class="pond" d="M1380 590l20 -5l5 25l-20 -5zM1220 570l22 2l-4 24l-20 -6zM1460 950l40-10l15 20l-30 20l-25-10zM2130 880l35-12l-5 12zM785 925l60 15l10 10l-70 -8zM1420 260l30 5l15 15l-20 2zM300 725l14-2l-5 10zM430 1450l60 5l-30 15z" />
                    <g class="lane">
                      {#each lanes as d}<path {d} />{/each}
                    </g>
                    <g class="street">
                      {#each streets as d}<path {d} />{/each}
                    </g>
                    <g class="casing">
                      {#each majors as d}<path {d} />{/each}
                    </g>
                    <g class="major">
                      {#each majors as d}<path {d} />{/each}
                    </g>
                    <path class="paths" d="M260 1360L310 1300L360 1290L350 1320L300 1340L270 1370M300 1400L330 1360L310 1350M480 1300L530 1270L570 1300M485 1305L520 1280M470 1400L490 1340L490 1390L520 1410L480 1440M350 1450L340 1400M350 1430L400 1440L420 1460" />
                  </g>

                  <rect x="104" y="242" width="18" height="12" rx="1" fill="#6c70c8" />
                  <text class="shield" x="113" y="252">M4</text>
                  {#each layers as layer}
                    {#each layer.list as l}
                      <text
                        class={["label", layer.kind, l.start && "start"]}
                        x={l.x}
                        y={l.y}
                        transform={l.r ? `rotate(${l.r} ${l.x} ${l.y})` : undefined}
                      >{l.t}</text>
                    {/each}
                  {/each}
                  <text class="label stream start" x="723" y="196" transform="rotate(20 723 196)">River Thames</text>
                  <text class="label city" x="564" y="184">London</text>

                  {#each pins as pin}
                    <g transform="translate({pin.x} {pin.y})">
                      <path d="M0 19Q-1 13 -6 8A10 10 0 1 1 6 8Q1 13 0 19z" fill={pin.color} />
                      <path d={glyphs[pin.glyph]} fill="#fff" fill-rule="evenodd" />
                    </g>
                  {/each}
                  <g transform="translate(374 210)">
                    <path d="M0 29Q-1 18 -8 10A13 13 0 1 1 8 10Q1 18 0 29z" fill="#ea4335" />
                    <circle r="4" fill="#8b1410" />
                  </g>
                </svg>

                <div class="map-types">
                  <button class:on={mapType === "map"} onclick={() => (mapType = "map")}>Map</button>
                  <button class:on={mapType === "sat"} onclick={() => (mapType = "sat")}>Satellite</button>
                </div>
                <button class="map-btn full" aria-label="Full screen">
                  <svg viewBox="0 0 18 18" width="18" height="18">
                    <path d="M1 6V1H6M12 1H17V6M17 12V17H12M6 17H1V12" fill="none" stroke="#666" stroke-width="2" />
                  </svg>
                </button>
                <div class="map-side">
                  <button class="map-btn" aria-label="Street View">
                    <svg viewBox="0 0 18 30" width="18" height="30">
                      <path d="M5 11h8q2 0 2 2l2 8l-2 1l-2-5l-1 12h-2l-1-8l-1 8h-2l-1-12l-2 5l-2-1l2-8q0-2 2-2z" fill="#fbb12a" stroke="#9a7b3c" />
                      <path d="M6 11h6l-3 5z" fill="#e2762b" />
                      <circle cx="9" cy="6" r="5" fill="#fbb12a" stroke="#9a7b3c" />
                    </svg>
                  </button>
                  <div class="zoom">
                    <button class="map-btn" aria-label="Zoom in">
                      <svg viewBox="0 0 18 18" width="18" height="18"><path d="M0 7h7V0h4v7h7v4h-7v7H7v-7H0z" fill="#666" /></svg>
                    </button>
                    <hr />
                    <button class="map-btn" aria-label="Zoom out">
                      <svg viewBox="0 0 18 18" width="18" height="18"><path d="M0 7h18v4H0z" fill="#666" /></svg>
                    </button>
                  </div>
                </div>
                <div class="google" aria-label="Google">
                  <i class="b">G</i><i class="r">o</i><i class="y">o</i><i class="b">g</i><i class="g">l</i><i class="r">e</i>
                </div>
                <div class="credits">
                  <button>Keyboard shortcuts</button>
                  <span>Map data ©2022</span>
                  <a href="#terms">Terms of Use</a>
                  <a href="#report">Report a map error</a>
                </div>
              </div>
            </div>
          </section>
        </div>
      </main>
    </div>
  </div>
  <div class="scroll-track"><div class="scroll-thumb"></div></div>
</div>

<style>
  :global(body) {
    margin: 0;
    background: #f3f3f4;
  }

  .page {
    display: flex;
    min-height: 100vh;
    font-family: "Open Sans", sans-serif;
    font-size: 13px;
    color: #676a6c;
  }

  .app {
    flex: 1;
    min-width: 0;
    display: flex;
    flex-direction: column;
  }

  a {
    color: inherit;
    text-decoration: none;
  }

  button {
    font-family: inherit;
    cursor: pointer;
  }

  ul,
  ol {
    list-style: none;
    margin: 0;
    padding: 0;
  }

  .icon {
    fill: currentColor;
    flex: none;
  }

  .scroll-track {
    width: 10px;
    display: flex;
    background: #e6e6e8;
  }

  .scroll-thumb {
    flex: 1;
    border-radius: 5px 5px 0 0;
    background: #29b0e8;
  }

  .topbar {
    display: flex;
    height: 61px;
    background: #3a4d63;
    color: #d6e1f8;
    font-size: 15px;
  }

  .logo {
    display: flex;
    flex-direction: column;
    width: 130px;
    padding: 13px 0 0 20px;
    font-family: Lato, sans-serif;
    font-size: 23px;
    font-weight: 700;
    line-height: 18px;
    color: #fff;
  }

  .logo b,
  .logo em {
    color: #fcb24c;
    font-style: normal;
    font-weight: 700;
  }

  .logo em {
    font-size: 24px;
    line-height: 16px;
  }

  .main-nav,
  .user-nav {
    display: flex;
  }

  .user-nav {
    margin-left: auto;
    padding-right: 12px;
  }

  .topbar nav a {
    display: flex;
    align-items: center;
    gap: 5px;
    padding: 0 22px 2px 20px;
  }

  .main-nav a + a,
  .user-nav a {
    border-left: 1px solid #33465a;
  }

  .body {
    flex: 1;
    display: flex;
  }

  .sidebar {
    width: 220px;
    flex: none;
    background: #2f4050;
    color: #a7b1c2;
    font-weight: 600;
    line-height: 1.43;
  }

  .sidebar a {
    display: flex;
    align-items: center;
    justify-content: space-between;
    padding: 14px 20px 14px 25px;
  }

  .sidebar .active {
    border-left: 4px solid #29b0e8;
    background: #293846;
    color: #fff;
  }

  .angle {
    fill: none;
    stroke: currentColor;
  }

  main {
    flex: 1;
    min-width: 0;
    padding: 30px 40px 22px;
  }

  .heading {
    display: flex;
    border: 1px solid #e4e6e9;
    border-radius: 3px;
    background: #fff;
  }

  .heading-title {
    flex: none;
    padding: 12px 15px 15px;
    background: #f3f6fb;
  }

  h1 {
    margin: 0 0 7px;
    font-size: 26px;
    line-height: 35px;
    font-weight: 700;
  }

  .breadcrumb {
    display: flex;
    line-height: 19px;
  }

  .breadcrumb li + li::before {
    content: "/";
    padding: 0 6px;
    color: #ccc;
  }

  .heading p {
    align-self: center;
    margin: 0;
    padding: 0 15px;
    font-size: 15px;
    font-weight: 300;
    color: #777;
  }

  .columns {
    display: flex;
    align-items: flex-start;
    gap: 30px;
    margin-top: 35px;
  }

  .panel {
    flex: 1;
    min-width: 0;
    background: #fff;
  }

  .panel-head {
    min-height: 67px;
    padding: 13px 20px 0;
    border: solid #e4e8ec;
    border-width: 1px 0;
    background: #f3f6fb;
  }

  .spaced {
    display: flex;
    align-items: flex-start;
    justify-content: space-between;
    min-height: 79px;
  }

  .spaced .btn {
    margin-top: 2px;
  }

  h2 {
    margin: 0 0 1px;
    font-size: 24px;
    line-height: 29px;
    font-weight: 300;
  }

  small {
    display: block;
    font-size: 11px;
    line-height: 16px;
  }

  .spaced small {
    margin-top: 13px;
  }

  .panel-body {
    padding: 15px 20px 19px;
  }

  .list {
    padding: 16px 21px 41px;
  }

  .btn {
    display: inline-flex;
    align-items: center;
    gap: 4px;
    height: 34px;
    padding: 0 13px;
    border: 1px solid transparent;
    border-radius: 3px;
    font-size: 14px;
    color: #fff;
  }

  .primary {
    background: #29b0e8;
  }

  .danger {
    background: #ed5565;
  }

  .white {
    border-color: #e7eaec;
    background: #fff;
    color: #676a6c;
  }

  .last {
    margin-left: auto;
  }

  .location + .location {
    margin-top: 7px;
  }

  .location-head {
    display: flex;
    align-items: center;
    justify-content: space-between;
    width: 100%;
    height: 41px;
    padding: 0 15px 2px;
    border: 0;
    border-radius: 2px;
    background: #e4e8ef;
    font-size: 18px;
    font-weight: 700;
    color: #293846;
  }

  .caret {
    border: 6px solid transparent;
    border-top-color: #293846;
    border-bottom: 0;
  }

  .caret.up {
    border-top: 0;
    border-bottom: 6px solid #293846;
  }

  .location-body {
    padding: 10px 15px 20px;
  }

  .facts {
    padding-bottom: 6px;
    border-bottom: 1px dashed #e7eaec;
    font-size: 15px;
    font-weight: 700;
  }

  .facts li {
    display: flex;
    align-items: center;
    gap: 9px;
    height: 31px;
  }

  .facts .icon {
    fill: #2b2f33;
  }

  .actions {
    display: flex;
    gap: 5px;
    padding-top: 20px;
  }

  .map {
    position: relative;
    height: 480px;
    overflow: hidden;
    background: #e8eaed;
    font-family: Roboto, sans-serif;
  }

  .canvas {
    display: block;
    width: 100%;
    height: 100%;
  }

  .park {
    fill: #a8dab5;
  }

  .cream {
    fill: #fef1cc;
  }

  .rosy {
    fill: #fcdcdb;
  }

  .rail {
    stroke: #d2d5da;
    stroke-width: 4;
  }

  .water {
    stroke: #9bbff9;
  }

  .pond {
    fill: #9bbff9;
  }

  .lane {
    stroke: #fff;
    stroke-width: 5;
  }

  .street {
    stroke: #fff;
    stroke-width: 7;
  }

  .casing {
    stroke: #fabb3a;
    stroke-width: 13;
    stroke-linecap: round;
  }

  .major {
    stroke: #fdeaaa;
    stroke-width: 7;
    stroke-linecap: round;
  }

  .paths {
    stroke: #3d9a5c;
    stroke-width: 3;
    stroke-dasharray: 10 6;
  }

  .label {
    font-size: 14px;
    text-anchor: middle;
    stroke: #fff;
    stroke-width: 2px;
    stroke-linejoin: round;
    paint-order: stroke;
  }

  .start {
    text-anchor: start;
  }

  .district {
    font-size: 12px;
    font-weight: 500;
    letter-spacing: 1px;
    fill: #3c4043;
  }

  .quarter {
    font-size: 10px;
    letter-spacing: 1px;
    fill: #3c4043;
  }

  .town {
    fill: #202124;
  }

  .shop {
    fill: #1a73e8;
  }

  .green {
    fill: #188038;
  }

  .sight {
    fill: #0d868f;
  }

  .road {
    font-size: 10px;
    fill: #7a4420;
  }

  .stream {
    font-size: 10px;
    fill: #3367c8;
    stroke: none;
  }

  .city {
    font-size: 26px;
    font-weight: 500;
    fill: #202124;
  }

  .shield {
    font-size: 9px;
    font-weight: 700;
    text-anchor: middle;
    fill: #fff;
  }

  .map-types {
    position: absolute;
    top: 10px;
    left: 10px;
    display: flex;
    box-shadow: 0 1px 4px rgba(0, 0, 0, 0.3);
  }

  .map-types button {
    height: 40px;
    padding: 0 17px;
    border: 0;
    background: #fff;
    font-size: 18px;
    color: #565656;
  }

  .map-types button + button {
    border-left: 1px solid #e6e6e6;
  }

  .map-types .on {
    font-weight: 500;
    color: #000;
  }

  .map-btn {
    display: flex;
    align-items: center;
    justify-content: center;
    width: 40px;
    height: 40px;
    padding: 0;
    border: 0;
    border-radius: 2px;
    background: #fff;
    box-shadow: 0 1px 4px rgba(0, 0, 0, 0.3);
  }

  .full {
    position: absolute;
    top: 10px;
    right: 10px;
  }

  .map-side {
    position: absolute;
    right: 10px;
    bottom: 24px;
    display: flex;
    flex-direction: column;
    gap: 32px;
  }

  .zoom {
    border-radius: 2px;
    background: #fff;
    box-shadow: 0 1px 4px rgba(0, 0, 0, 0.3);
  }

  .zoom .map-btn {
    box-shadow: none;
  }

  .zoom hr {
    height: 1px;
    margin: 0 5px;
    border: 0;
    background: #e6e6e6;
  }

  .google {
    position: absolute;
    bottom: 2px;
    left: 10px;
    font-size: 18px;
    line-height: 22px;
    display: flex;
    text-shadow: 0 0 2px #fff, 0 0 2px #fff;
  }

  .google i {
    font-style: normal;
    font-weight: 500;
  }

  .b {
    color: #4285f4;
  }

  .r {
    color: #ea4335;
  }

  .y {
    color: #fbbc05;
  }

  .g {
    color: #34a853;
  }

  .credits {
    position: absolute;
    right: 0;
    bottom: 0;
    display: flex;
    gap: 12px;
    padding: 0 6px;
    background: rgba(245, 245, 245, 0.75);
    font-size: 10px;
    line-height: 14px;
    color: #000;
  }

  .credits button {
    padding: 0;
    border: 0;
    background: none;
    font-size: 10px;
    line-height: 14px;
    color: #000;
  }
</style>
